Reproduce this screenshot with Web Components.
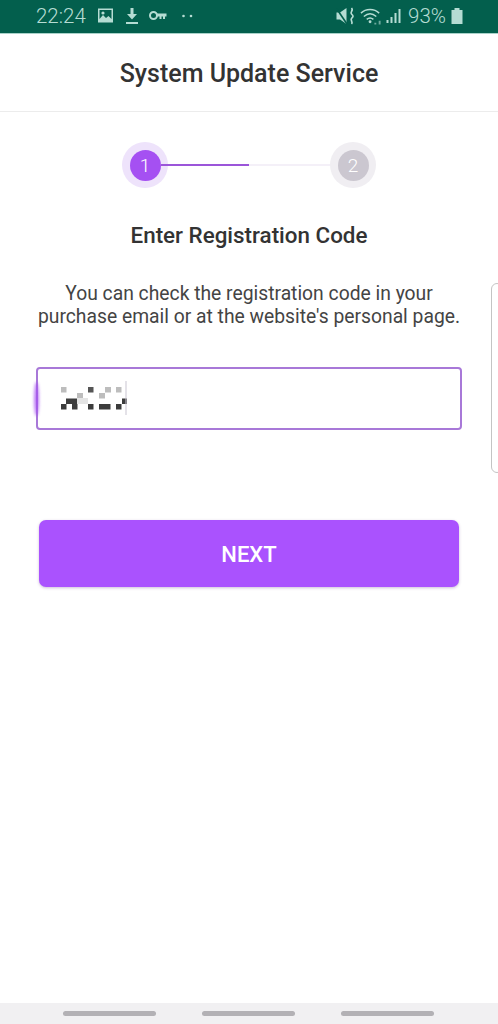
<!DOCTYPE html>
<html>
<head>
<meta charset="utf-8">
<title>System Update Service</title>
<style>
  html, body { margin: 0; padding: 0; height: 100%; background: #fff; }
  body { font-family: Roboto, "Liberation Sans", sans-serif; overflow: hidden; }
  app-screen { height: 1024px; }
</style>
</head>
<body>
<app-screen>
  <status-bar></status-bar>
  <title-bar>System Update Service</title-bar>
  <step-indicator></step-indicator>
  <h-text>Enter Registration Code</h-text>
  <desc-text>You can check the registration code in your<br>purchase email or at the website's personal page.</desc-text>
  <code-input></code-input>
  <next-button>NEXT</next-button>
  <nav-bar></nav-bar>
</app-screen>

<script>
class AppScreen extends HTMLElement {
  constructor() {
    super();
    this.attachShadow({ mode: "open" });
    this.shadowRoot.innerHTML = `
      <style>
        :host {
          display: flex;
          flex-direction: column;
          position: relative;
          width: 498px;
          background: #fff;
          overflow: hidden;
        }
        .handle {
          position: absolute;
          left: 491px;
          top: 283px;
          width: 12px;
          height: 190px;
          box-sizing: border-box;
          border: 1px solid #c4c4c4;
          border-radius: 8px;
          background: #fff;
        }
      </style>
      <slot></slot>
      <div class="handle"></div>
    `;
  }
}

class StatusBar extends HTMLElement {
  constructor() {
    super();
    this.attachShadow({ mode: "open" });
    this.shadowRoot.innerHTML = `
      <style>
        :host {
          display: flex;
          align-items: center;
          box-sizing: border-box;
          height: 34px;
          flex: none;
          padding: 0 35px 2px 36px;
          background: #035f4d;
          border-bottom: 1px solid #a9d2c9;
          color: #b5dcd3;
          font-size: 20.500px;
          font-weight: 300;
        }
        .left, .right { display: flex; align-items: center; }
        .right { margin-left: auto; }
        svg { display: block; fill: #b5dcd3; flex: none; }
        .time { margin-right: 11px; }
      </style>
      <div class="left">
        <span class="time">22:24</span>
        <svg width="17" height="17" viewBox="0 0 17 16" style="margin-right:11px">
          <path d="M1 1h15v14H1z M2.500 2.500v9l3.500-4 3 3 2.500-2 3 3v-9z" fill-rule="evenodd"/>
          <circle cx="6" cy="5.500" r="1.600"/>
        </svg>
        <svg width="14" height="18" viewBox="0 0 14 18" style="margin-right:10px">
          <path d="M5.500 1h3v6h3.500L7 12.500 2 7h3.500z"/>
          <rect x="1" y="15" width="12" height="2"/>
        </svg>
        <svg width="18" height="11" viewBox="0 0 18 10" style="margin-right:15px">
          <circle cx="4.500" cy="5" r="3.500" fill="none" stroke="#b5dcd3" stroke-width="2"/>
          <path d="M7.500 3H17.500V6H16V8.500H14V6H12.500V8.500H10.500V6H7.500z"/>
        </svg>
        <svg width="11" height="4" viewBox="0 0 11 4">
          <circle cx="1.500" cy="2" r="1.300"/>
          <circle cx="9" cy="2" r="1.300"/>
        </svg>
      </div>
      <div class="right">
        <svg width="19" height="18" viewBox="0 0 19 18" style="margin-right:5px">
          <path d="M0.500 5.500H4L10.500 1V17L4 12.500H0.500z"/>
          <path d="M0.500 1.500L11 17" stroke="#035f4d" stroke-width="1.600"/>
          <path d="M15.500 1c2.500 2.500-2 4 0 6s2 2.500 0 4.500c-1.500 1.800 2 3.500 0 5.500" fill="none" stroke="#b5dcd3" stroke-width="1.700"/>
        </svg>
        <svg width="23" height="20" viewBox="0 0 24 20" style="margin-right:3px">
          <path d="M1 7C6 2 15 2 20 7" fill="none" stroke="#b5dcd3" stroke-width="1.500"/>
          <path d="M4 10.500C8 7 13 7 17 10.500" fill="none" stroke="#b5dcd3" stroke-width="1.500"/>
          <path d="M7 13.500C9.500 11.500 11.500 11.500 14 13.500" fill="none" stroke="#b5dcd3" stroke-width="1.500"/>
          <circle cx="10.500" cy="16" r="1.500"/>
          <path d="M15 17h2v2h-2z M19.500 15h2v4h-2z" opacity=".6"/>
        </svg>
        <svg width="15" height="18" viewBox="0 0 15 18" style="margin-right:7px">
          <rect x="0.500" y="13" width="2" height="3"/>
          <rect x="4.500" y="10" width="2" height="6"/>
          <rect x="8.500" y="6" width="2" height="10"/>
          <rect x="12.500" y="2" width="2" height="14"/>
        </svg>
        <span>93%</span>
        <svg width="12" height="18" viewBox="0 0 12 18" style="margin-left:5px">
          <path d="M3.500 1h5v2h3v14H.500V3h3z"/>
        </svg>
      </div>
    `;
  }
}

class TitleBar extends HTMLElement {
  constructor() {
    super();
    this.attachShadow({ mode: "open" });
    this.shadowRoot.innerHTML = `
      <style>
        :host {
          display: flex;
          align-items: center;
          justify-content: center;
          box-sizing: border-box;
          flex: none;
          height: 78px;
          padding-top: 2px;
          border-bottom: 1px solid #ececec;
          color: #333;
          font-size: 25px;
          font-weight: 500;
        }
      </style>
      <slot></slot>
    `;
  }
}

class StepIndicator extends HTMLElement {
  constructor() {
    super();
    this.attachShadow({ mode: "open" });
    this.shadowRoot.innerHTML = `
      <style>
        :host {
          display: flex;
          align-items: center;
          flex: none;
          box-sizing: border-box;
          margin: 30px 0 0 122px;
          width: 254px;
          height: 46px;
        }
        .step {
          flex: none;
          display: flex;
          align-items: center;
          justify-content: center;
          box-sizing: border-box;
          width: 46px;
          height: 46px;
          border-radius: 50%;
        }
        .step span {
          display: flex;
          align-items: center;
          justify-content: center;
          width: 31px;
          height: 31px;
          border-radius: 50%;
          color: #fff;
          font-size: 19px;
          font-weight: 300;
        }
        .one { background: #eee3fb; }
        .one span { background: #a550f2; }
        .two { background: #f0eef2; }
        .two span { background: #cbc7d0; }
        .line { flex: 1; height: 2px; display: flex; margin-left: -7px; position: relative; }
        .done { flex: none; width: 88px; background: #9b55d9; }
        .todo { flex: 1; background: #f4f0f8; }
      </style>
      <div class="step one"><span>1</span></div>
      <div class="line"><div class="done"></div><div class="todo"></div></div>
      <div class="step two"><span>2</span></div>
    `;
  }
}

class HText extends HTMLElement {
  constructor() {
    super();
    this.attachShadow({ mode: "open" });
    this.shadowRoot.innerHTML = `
      <style>
        :host {
          display: block;
          flex: none;
          margin-top: 34px;
          text-align: center;
          color: #333;
          font-size: 22.400px;
          font-weight: 500;
          line-height: 26px;
        }
      </style>
      <slot></slot>
    `;
  }
}

class DescText extends HTMLElement {
  constructor() {
    super();
    this.attachShadow({ mode: "open" });
    this.shadowRoot.innerHTML = `
      <style>
        :host {
          display: block;
          flex: none;
          margin-top: 34px;
          text-align: center;
          color: #444;
          font-size: 19.300px;
          line-height: 23px;
          white-space: nowrap;
        }
      </style>
      <slot></slot>
    `;
  }
}

class CodeInput extends HTMLElement {
  constructor() {
    super();
    this.attachShadow({ mode: "open" });
    this.shadowRoot.innerHTML = `
      <style>
        :host {
          display: block;
          flex: none;
          position: relative;
          box-sizing: border-box;
          width: 426px;
          height: 63px;
          margin: 39px 0 0 36px;
          border: 2px solid #a878d8;
          border-radius: 4px;
          background: #fff;
        }
        .glow {
          position: absolute;
          left: -4px;
          top: 13px;
          width: 5px;
          height: 34px;
          border-radius: 50%;
          background: #a550f2;
          filter: blur(1.500px);
          opacity: .75;
        }
        svg { position: absolute; left: -2px; top: -2px; }
      </style>
      <div class="glow"></div>
      <svg width="120" height="60" viewBox="36 367 120 60" aria-hidden="true">
        <g fill="#bdbdbd">
          <rect x="61" y="387" width="5.500" height="5.500"/>
          <rect x="105" y="387" width="6" height="5.500"/>
          <rect x="116" y="387" width="5.500" height="5.500"/>
          <rect x="99" y="393" width="6" height="5.500"/>
          <rect x="77" y="393" width="6" height="5.500"/>
        </g>
        <rect x="77" y="398" width="11" height="6" fill="#e4e4e4"/>
        <g fill="#3c3c3c">
          <rect x="88" y="387" width="5.500" height="5.500" fill="#555"/>
          <rect x="66" y="398.500" width="11" height="5.500"/>
          <rect x="122" y="398.500" width="5" height="5.500"/>
          <rect x="61" y="404" width="5.500" height="5.500"/>
          <rect x="72" y="404" width="5.500" height="5.500"/>
          <rect x="88" y="404" width="5.500" height="5.500"/>
          <rect x="99" y="404" width="11.500" height="5.500"/>
          <rect x="116" y="404" width="5.500" height="5.500"/>
        </g>
        <rect x="125.500" y="381" width="1" height="34" fill="#c9c5d2"/>
      </svg>
    `;
  }
}

class NextButton extends HTMLElement {
  constructor() {
    super();
    this.attachShadow({ mode: "open" });
    this.shadowRoot.innerHTML = `
      <style>
        :host {
          display: flex;
          align-items: center;
          justify-content: center;
          flex: none;
          box-sizing: border-box;
          width: 420px;
          height: 67px;
          margin: 90px 0 0 39px;
          padding-top: 1px;
          border-radius: 7px;
          background: #aa52fe;
          box-shadow: 0 1px 3px rgba(90, 40, 130, .3);
          color: #fff;
          font-size: 22px;
          font-weight: 500;
        }
      </style>
      <slot></slot>
    `;
  }
}

class NavBar extends HTMLElement {
  constructor() {
    super();
    this.attachShadow({ mode: "open" });
    this.shadowRoot.innerHTML = `
      <style>
        :host {
          display: flex;
          align-items: center;
          justify-content: center;
          gap: 46px;
          flex: none;
          box-sizing: border-box;
          height: 21px;
          padding-right: 1px;
          margin-top: auto;
          background: #f1f0f2;
        }
        i {
          display: block;
          width: 93px;
          height: 5px;
          border-radius: 3px;
          background: #b3b1b5;
        }
      </style>
      <i></i><i></i><i></i>
    `;
  }
}

customElements.define("app-screen", AppScreen);
customElements.define("status-bar", StatusBar);
customElements.define("title-bar", TitleBar);
customElements.define("step-indicator", StepIndicator);
customElements.define("h-text", HText);
customElements.define("desc-text", DescText);
customElements.define("code-input", CodeInput);
customElements.define("next-button", NextButton);
customElements.define("nav-bar", NavBar);
</script>
</body>
</html>
